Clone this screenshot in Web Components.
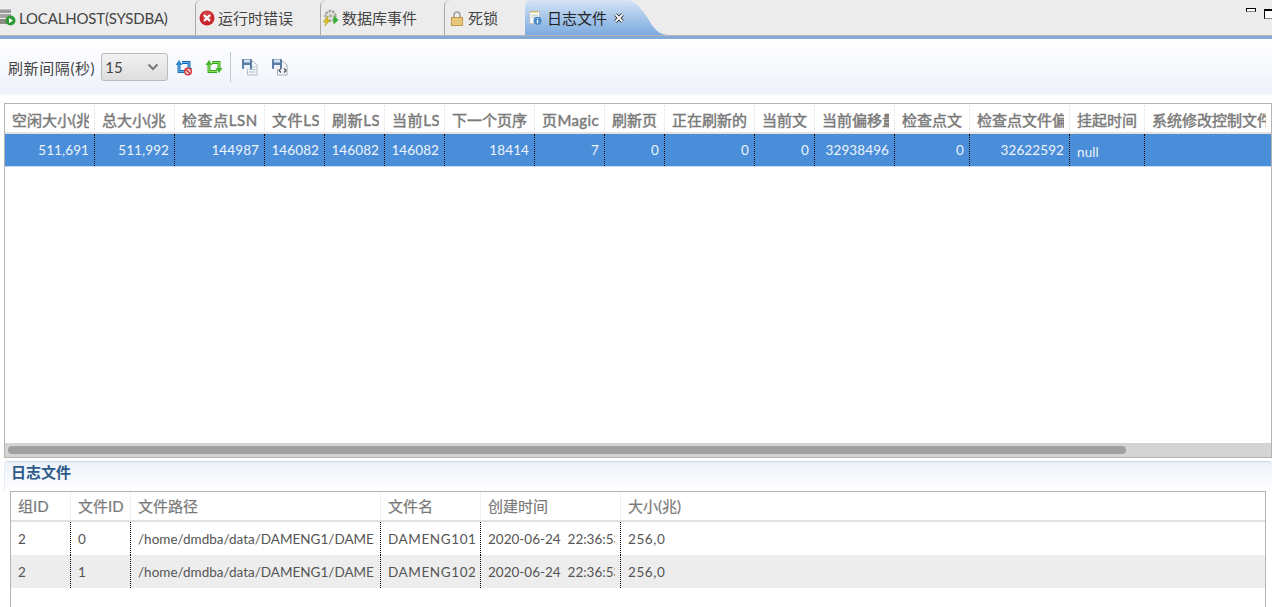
<!DOCTYPE html>
<html>
<head>
<meta charset="utf-8">
<style>
  html, body { margin: 0; height: 100%; overflow: hidden; background: #fff; }
  body { font: 15px Lato, "Noto Sans CJK SC", sans-serif; color: #444; }
  #app { display: flex; flex-direction: column; height: 607px; overflow: hidden; }
</style>
</head>
<body>
<div id="app">
  <tab-bar>
    <tab-item width="195" first>
      <svg slot="icon" width="16" height="17" viewBox="0 0 16 17"><rect x="0" y="0" width="11" height="4" fill="#9a9a9a"/><rect x="0" y="0" width="11" height="1" fill="#c4c4c4"/><rect x="0" y="5" width="11" height="4" fill="#a4a4a0"/><rect x="0" y="10" width="11" height="5" fill="#8c8c84"/><circle cx="10.500" cy="11.500" r="5" fill="#2f9a35"/><path d="M9 9l4 2.500-4 2.500z" fill="#fff"/></svg>
      <span style="letter-spacing:-.18px">LOCALHOST(SYSDBA)</span>
    </tab-item>
    <tab-item width="125">
      <svg slot="icon" width="16" height="16" viewBox="0 0 16 16"><circle cx="8" cy="8" r="7.500" fill="#c8242c"/><circle cx="8" cy="6" r="5" fill="#e05a5a" opacity=".5"/><path d="M5 5l6 6M11 5l-6 6" stroke="#fff" stroke-width="2.400"/></svg>
      运行时错误
    </tab-item>
    <tab-item width="124">
      <svg slot="icon" style="margin-left:-1px" width="16" height="17" viewBox="0 0 16 17"><circle cx="7.500" cy="7" r="5" fill="#e4e4de" stroke="#a5a59c" stroke-width="2.400" stroke-dasharray="2.500 1"/><circle cx="7.500" cy="7" r="1.800" fill="#b5b5ac"/><path d="M5 7L0 13h3l-1 4 5-6H4.500z" fill="#e0c020" stroke="#a89018" stroke-width=".5"/><path d="M10.500 6.500l5 4.500-5 4.500z" fill="#35b035"/></svg>
      数据库事件
    </tab-item>
    <tab-item width="81">
      <svg slot="icon" style="margin-left:1px" width="16" height="16" viewBox="0 0 16 16"><path d="M5 8V5a3 3 0 0 1 6 0v3" fill="none" stroke="#a0a0a0" stroke-width="1.600"/><rect x="2.500" y="7.500" width="11" height="8" fill="#e8c67a" stroke="#c49a4c"/></svg>
      死锁
    </tab-item>
    <tab-item width="100" active>
      <svg slot="icon" width="16" height="18" viewBox="0 0 16 18"><rect x="1" y="1" width="12" height="15" fill="#fbfbf6" stroke="#bbb"/><path d="M2 1.500h10" stroke="#d9a92c" stroke-width="2" stroke-dasharray="1 1"/><path d="M3 5.500h8M3 8h7" stroke="#9bb"/><circle cx="10.500" cy="12.500" r="5" fill="#4a8bcc"/><path d="M10.500 11.500v4M10.500 9.300v1.300" stroke="#fff" stroke-width="1.600"/></svg>
      日志文件
      <svg slot="close" width="12" height="12" viewBox="0 0 12 12"><path d="M2.500 2.500l7 7M9.500 2.500l-7 7" stroke="#222" stroke-width="3.600"/><path d="M2.500 2.500l7 7M9.500 2.500l-7 7" stroke="#fff" stroke-width="1.800"/></svg>
    </tab-item>
  </tab-bar>

  <tool-bar>
    <span style="letter-spacing:.6px">刷新间隔(秒)</span>
    <combo-box value="15"></combo-box>
    <tool-button style="margin-left:7px">
      <svg width="18" height="18" viewBox="0 0 18 18"><path d="M4 6v7.500h8M7 4.500h7v6" fill="none" stroke="#1f6db0" stroke-width="3"/><path d="M4 6v7.500h8M7 4.500h7v6" fill="none" stroke="#5cb0e8" stroke-width="1.200"/><path d="M.5 7L4 2l3.500 5z" fill="#2f86c8"/><path d="M10.500 10l3.500 4 3.500-4z" fill="#2f86c8"/><circle cx="13" cy="13.500" r="4" fill="#d83a3a"/><circle cx="13" cy="13.500" r="2.500" fill="#f4dede"/><path d="M11.200 11.700l3.600 3.600" stroke="#c82020" stroke-width="1.400"/></svg>
    </tool-button>
    <tool-button style="margin-left:12px">
      <svg width="18" height="18" viewBox="0 0 18 18"><path d="M4 6v7.500h8M7 4.500h7v6" fill="none" stroke="#35a52a" stroke-width="3"/><path d="M4 6v7.500h8M7 4.500h7v6" fill="none" stroke="#8ae050" stroke-width="1.200"/><path d="M.5 7L4 2l3.500 5z" fill="#45b52c"/><path d="M10.500 10l3.500 5 3.500-5z" fill="#45b52c"/></svg>
    </tool-button>
    <tool-sep></tool-sep>
    <tool-button>
      <svg width="18" height="18" viewBox="0 0 18 18"><path d="M6.500 3.500h6l3.500 3.500v10h-9.500z" fill="#f4f6f8" stroke="#b4bcc4"/><path d="M8 9h6.500M8 11.500h6.500M8 14h6.500" stroke="#a8c0d4"/><rect x="1" y="1" width="10" height="10" rx="1" fill="#5a7ca6"/><rect x="3" y="1.500" width="6" height="3" fill="#d6e2f0"/><rect x="3" y="7" width="6" height="4" fill="#eef2f6"/></svg>
    </tool-button>
    <tool-button style="margin-left:12px">
      <svg width="18" height="18" viewBox="0 0 18 18"><path d="M6.500 3.500h6l3.500 3.500v10h-9.500z" fill="#f4f6f8" stroke="#a4acb4"/><path d="M10 10.500l-2 2 2 2M13 10.500l2 2-2 2" fill="none" stroke="#445" stroke-width="1.100"/><rect x="1" y="1" width="10" height="10" rx="1" fill="#5a7ca6"/><rect x="3" y="1.500" width="6" height="3" fill="#d6e2f0"/><rect x="3" y="7" width="6" height="4" fill="#eef2f6"/></svg>
    </tool-button>
  </tool-bar>

  <data-grid columns="90 80 90 60 60 60 90 70 60 90 60 80 75 100 75 1fr" style="margin:8px 0 0 4px;height:355px;flex:none" scroll>
    <grid-row head strong>
      <grid-cell>空闲大小(兆</grid-cell><grid-cell>总大小(兆</grid-cell><grid-cell style="letter-spacing:.6px">检查点LSN</grid-cell><grid-cell style="letter-spacing:.6px">文件LS</grid-cell><grid-cell style="letter-spacing:.6px">刷新LS</grid-cell><grid-cell style="letter-spacing:.6px">当前LS</grid-cell><grid-cell>下一个页序</grid-cell><grid-cell style="letter-spacing:.4px">页Magic</grid-cell><grid-cell>刷新页</grid-cell><grid-cell>正在刷新的</grid-cell><grid-cell>当前文</grid-cell><grid-cell>当前偏移量</grid-cell><grid-cell>检查点文</grid-cell><grid-cell>检查点文件偏</grid-cell><grid-cell>挂起时间</grid-cell><grid-cell>系统修改控制文件</grid-cell>
    </grid-row>
    <grid-row selected>
      <grid-cell end>511,691</grid-cell><grid-cell end>511,992</grid-cell><grid-cell end>144987</grid-cell><grid-cell end>146082</grid-cell><grid-cell end>146082</grid-cell><grid-cell end>146082</grid-cell><grid-cell end>18414</grid-cell><grid-cell end>7</grid-cell><grid-cell end>0</grid-cell><grid-cell end>0</grid-cell><grid-cell end>0</grid-cell><grid-cell end>32938496</grid-cell><grid-cell end>0</grid-cell><grid-cell end>32622592</grid-cell><grid-cell style="padding-top:4px">null</grid-cell><grid-cell></grid-cell>
    </grid-row>
  </data-grid>

  <section-title>日志文件</section-title>

  <data-grid columns="60 60 250 100 140 1fr" style="margin:0 6px 0 10px;height:130px;flex:none">
    <grid-row head>
      <grid-cell>组ID</grid-cell><grid-cell>文件ID</grid-cell><grid-cell>文件路径</grid-cell><grid-cell>文件名</grid-cell><grid-cell>创建时间</grid-cell><grid-cell>大小(兆)</grid-cell>
    </grid-row>
    <grid-row>
      <grid-cell>2</grid-cell><grid-cell>0</grid-cell><grid-cell>/home/dmdba/data/DAMENG1/DAME</grid-cell><grid-cell style="letter-spacing:.6px">DAMENG101.</grid-cell><grid-cell>2020-06-24&nbsp; 22:36:53</grid-cell><grid-cell style="letter-spacing:.6px">256,0</grid-cell>
    </grid-row>
    <grid-row odd>
      <grid-cell>2</grid-cell><grid-cell>1</grid-cell><grid-cell>/home/dmdba/data/DAMENG1/DAME</grid-cell><grid-cell style="letter-spacing:.6px">DAMENG102.</grid-cell><grid-cell>2020-06-24&nbsp; 22:36:53</grid-cell><grid-cell style="letter-spacing:.6px">256,0</grid-cell>
    </grid-row>
  </data-grid>
</div>

<script>
function shadowEl(name, html) {
  customElements.define(name, class extends HTMLElement {
    constructor() {
      super()
      this.attachShadow({ mode: 'open' }).innerHTML = html
    }
  })
}

shadowEl('tab-bar', `
  <style>
    :host { display: flex; height: 36px; box-sizing: border-box; flex: none; background: #ececec; border-bottom: 1px solid #b4b4b4; }
    .win { margin-left: auto; display: flex; gap: 8px; padding: 8px 0 0 0; }
    i { display: block; border: 1px solid #000; border-bottom-color: #888; background: #fff; }
    i.a { width: 8px; height: 2px; }
    i.b { width: 7px; height: 7px; margin-top: 1px; border-top-width: 2px; border-right: 0; }
  </style>
  <slot></slot>
  <div class="win"><i class="a"></i><i class="b"></i></div>
`)

customElements.define('tab-item', class extends HTMLElement {
  constructor() {
    super()
    this.attachShadow({ mode: 'open' }).innerHTML = `
      <style>
        :host { display: inline-flex; align-items: center; gap: 3px; height: 35px; box-sizing: border-box; padding: 0 0 0 3px; border-left: 1px solid #aaa; border-top-left-radius: 6px; white-space: nowrap; color: #444; position: relative; flex: none; }
        :host([first]) { border-left: 0; padding-left: 0; border-radius: 0; }
        :host([active]) { border-left: 0; padding-left: 4px; gap: 5px; background: linear-gradient(#d6e4f5, #a6c6ea 50%, #7dabdf); color: #222; margin-right: 42px; }
        svg.curve { position: absolute; left: 100%; top: 0; }
        .close { display: inline-flex; margin-left: 1px; }
      </style>
      <slot name="icon"></slot><slot></slot><span class="close"><slot name="close"></slot></span>
      ${this.hasAttribute('active') ? `<svg class="curve" width="42" height="35" viewBox="0 0 42 35">
        <defs><linearGradient id="g" x1="0" y1="0" x2="0" y2="1"><stop offset="0" stop-color="#d6e4f5"/><stop offset=".5" stop-color="#a6c6ea"/><stop offset="1" stop-color="#7dabdf"/></linearGradient></defs>
        <path d="M0 0C10 0 14 6 22 17C28 27 32 34 42 35H0z" fill="url(#g)"/></svg>` : ''}
    `
    this.style.width = this.getAttribute('width') + 'px'
  }
})

shadowEl('tool-bar', `
  <style>
    :host { display: flex; align-items: center; height: 59px; flex: none; box-sizing: border-box; padding: 0 0 0 8px; border-top: 3px solid #85a9d6; background: linear-gradient(#fff, #eef3fb 95%, #f6f9fd); color: #444; white-space: nowrap; }
  </style>
  <slot></slot>
`)

customElements.define('combo-box', class extends HTMLElement {
  constructor() {
    super()
    this.attachShadow({ mode: 'open' }).innerHTML = `
      <style>
        :host { display: flex; align-items: center; justify-content: space-between; box-sizing: border-box; width: 67px; height: 28px; margin-left: 6px; padding: 0 8px 0 3px; border: 1px solid #bbb; border-radius: 3px; background: linear-gradient(#f2f2f2, #dedede); color: #444; }
      </style>
      <span>${this.getAttribute('value')}</span>
      <svg width="12" height="8" viewBox="0 0 12 8"><path d="M1.500 1.500L6 6l4.500-4.500" fill="none" stroke="#777" stroke-width="2"/></svg>
    `
  }
})

shadowEl('tool-button', `
  <style>:host { display: inline-flex; }</style>
  <slot></slot>
`)

shadowEl('tool-sep', `
  <style>:host { display: block; width: 1px; height: 30px; background: #c4c8cc; margin: 0 10px 0 7px; }</style>
`)

shadowEl('section-title', `
  <style>
    :host { display: block; flex: none; height: 30px; margin: 3px 0 0 4px; padding: 0 0 0 6px; box-sizing: border-box; border-top: 1px solid #c8d8e8; border-left: 1px solid #e4edf5; border-top-left-radius: 4px; border-top-right-radius: 4px; background: linear-gradient(#edf2fb, #fff); color: #2e5a88; font-weight: 700; line-height: 20px; }
  </style>
  <slot></slot>
`)

customElements.define('data-grid', class extends HTMLElement {
  constructor() {
    super()
    const scroll = this.hasAttribute('scroll')
    this.attachShadow({ mode: 'open' }).innerHTML = `
      <style>
        :host { display: flex; flex-direction: column; box-sizing: border-box; border: 1px solid #b4b4b4; overflow: hidden; }
        .rows { flex: 1; min-height: 0; overflow: hidden; }
        .bar { flex: none; height: 14px; background: #d4d4d4; display: flex; align-items: center; padding-left: 3px; }
        .thumb { width: 1118px; height: 8px; border-radius: 4px; background: #a0a0a0; }
      </style>
      <div class="rows"><slot></slot></div>
      ${scroll ? '<div class="bar"><div class="thumb"></div></div>' : ''}
    `
    const cols = this.getAttribute('columns').split(' ').map(c => c === '1fr' ? c : c + 'px')
    this.style.setProperty('--cols', cols.join(' '))
  }
})

shadowEl('grid-row', `
  <style>
    :host { display: grid; grid-template-columns: var(--cols); height: 33px; box-sizing: border-box; color: #555; font-size: 13.5px; padding-bottom: 1px; }
    :host([head]) { height: 30px; background: #fff; border-bottom: 2px solid #e2e2e2; color: #7a7a7a; font-size: 15px; -webkit-text-stroke: .2px #7a7a7a; --head-line: #ddd; padding-bottom: 2px; }
    :host([strong]) { -webkit-text-stroke: .45px #7a7a7a; padding-top: 1px; padding-bottom: 0; }
    :host([selected]) { background: #4a8dd8; color: #eef5fc; border-bottom: 1px solid #c9dcf0; letter-spacing: .1px; }
    :host([odd]) { background: #ededed; }
  </style>
  <slot></slot>
`)

shadowEl('grid-cell', `
  <style>
    :host { display: block; box-sizing: border-box; min-width: 0; padding: 0 5px 0 7px; border-right: 1px dotted #000; border-right-color: var(--head-line, #000); margin-bottom: -1px; }
    :host(:last-child) { border-right: 0; }
    .in { overflow: hidden; white-space: nowrap; height: 100%; display: flex; align-items: center; }
    :host([end]) .in { justify-content: flex-end; }
  </style>
  <div class="in"><span><slot></slot></span></div>
`)
</script>
</body>
</html>
